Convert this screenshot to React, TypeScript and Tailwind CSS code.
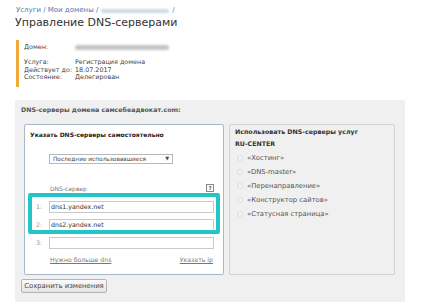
import React from "react";

const font = { fontFamily: '"DejaVu Sans", Verdana, sans-serif' };

function Radio({ label }: { label: string }) {
    return (
        <div className="flex items-center h-[14px]">
            <span className="w-[6px] h-[6px] rounded-full border border-[#dcdcdc] bg-[#f4f4f4] mr-[4px]" />
            <span className="text-[6.8px] text-[#555]">{label}</span>
        </div>
    );
}

function DnsRow({ n, value }: { n: number; value: string }) {
    return (
        <div className="flex items-center h-[12px]">
            <span className="w-[24px] pl-[11px] text-[6.3px] text-[#999]">{n}:</span>
            <div className="w-[165px] h-[12px] border border-[#c8c8c8] bg-white flex items-center px-[1px] text-[6.3px] text-[#333]">
                {value}
            </div>
        </div>
    );
}

export default function App() {
    return (
        <div className="w-[424px] h-[305px] bg-white overflow-hidden" style={font}>
            <div className="pl-[15px] pt-[6px]">
                <div className="flex items-center text-[7px] leading-[9px] text-[#4a78b0] pl-[1px]">
                    <span>Услуги / Мои домены /</span>
                    <span className="ml-[3px] w-[68px] h-[4px] bg-[#cdd9e8] rounded blur-[1px]" />
                    <span className="ml-[3px]">/</span>
                </div>
                <h1 className="text-[11px] leading-[16px] text-[#333]">
                    Управление DNS-серверами
                </h1>

                <div className="mt-[9px] ml-[1px] border-l-[3px] border-[#f2a93b] pl-[5px] h-[47px] pt-[3px] text-[6.4px] leading-[7.6px] text-[#444] grid grid-cols-[51px_1fr] content-start">
                    <span className="h-[9px] leading-[9px]">Домен:</span>
                    <span className="h-[9px] flex items-center">
                        <span className="w-[94px] h-[5px] bg-[#c4c4c4] rounded blur-[1px]" />
                    </span>
                    <span className="mt-[7px] whitespace-nowrap">Услуга:</span>
                    <span className="mt-[7px]">Регистрация домена</span>
                    <span className="whitespace-nowrap">Действует до:</span>
                    <span>18.07.2017</span>
                    <span className="whitespace-nowrap">Состояние:</span>
                    <span>Делегирован</span>
                </div>

                <div className="mt-[13px] w-[390px] h-[202px] bg-[#f0f0f0] px-[6px] pt-[5px]">
                    <div className="text-[6.3px] leading-[10px] font-bold text-[#555]">
                        DNS-серверы домена самсебеадвокат.com:
                    </div>
                    <div className="flex gap-[5px] mt-[9px] pl-[3px]">
                        <div className="relative w-[200px] h-[151px] bg-white border border-[#a8b8cc] rounded-[2px]">
                            <div className="pl-[5px] pt-[5px] text-[6px] leading-[10px] font-bold text-[#222]">
                                Указать DNS-серверы самостоятельно
                            </div>
                            <div className="mt-[14px] ml-[24px] w-[124px] h-[10px] border border-[#b8b8b8] bg-white flex items-center justify-between px-[3px] text-[5.8px] text-[#444]">
                                <span>Последние использовавшиеся</span>
                                <span className="text-[5px]">▼</span>
                            </div>
                            <div className="mt-[19px] flex items-center justify-between h-[10px] pl-[25px] pr-[9px]">
                                <span className="text-[6px] text-[#777]">DNS-сервер</span>
                                <span className="w-[8px] h-[8px] border border-[#888] text-[5.5px] leading-[6px] text-center text-[#555] font-bold">?</span>
                            </div>
                            <div className="mt-[8px] flex flex-col gap-[6px]">
                                <DnsRow n={1} value="dns1.yandex.net" />
                                <DnsRow n={2} value="dns2.yandex.net" />
                                <DnsRow n={3} value="" />
                            </div>
                            <div className="mt-[6px] flex justify-between pl-[25px] pr-[10px] text-[6.2px] text-[#777] underline">
                                <span>Нужно больше dns</span>
                                <span>Указать ip</span>
                            </div>
                            <div className="absolute left-[3px] top-[68px] w-[192px] h-[41px] border-[4px] border-[#22c5c8] rounded-[2px]" />
                        </div>
                        <div className="w-[166px] h-[151px] border border-[#d2d2d2] rounded-[2px] bg-[#f0f0f0] pl-[5px] pt-[1px]">
                            <div className="text-[6.3px] leading-[12px] font-bold text-[#333]">
                                Использовать DNS-серверы услуг
                                <br />
                                RU-CENTER
                            </div>
                            <div className="mt-[1px] pl-[2px]">
                                <Radio label="«Хостинг»" />
                                <Radio label="«DNS-master»" />
                                <Radio label="«Перенаправление»" />
                                <Radio label="«Конструктор сайтов»" />
                                <Radio label="«Статусная страница»" />
                            </div>
                        </div>
                    </div>
                    <button className="block mt-[4px] h-[14px] w-[86px] border border-[#b4b4b4] rounded-[2px] bg-gradient-to-b from-[#fafafa] to-[#e4e4e4] text-[6.8px] text-[#444]">
                        Сохранить изменения
                    </button>
                </div>
            </div>
        </div>
    );
}
